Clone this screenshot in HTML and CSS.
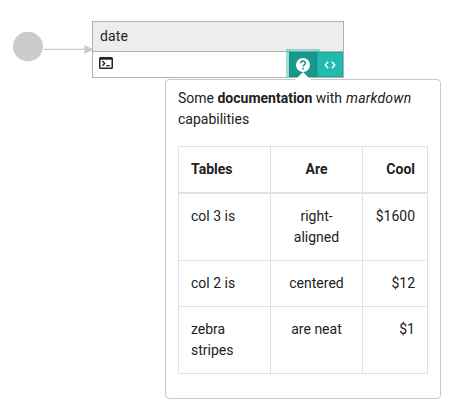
FILE: index.html
```html
<!DOCTYPE html>
<html lang="en">
<head>
<meta charset="utf-8">
<title>Workflow</title>
<link rel="stylesheet" href="styles.css">
</head>
<body>
<main class="canvas">
  <svg class="edges" width="100" height="80" viewBox="0 0 100 80" fill="#cbcbcb">
    <ellipse cx="28" cy="46.5" rx="15" ry="14.7"/>
    <path d="M44 49.4H86" stroke="#cbcbcb" stroke-width="1.3"/>
    <path d="M84.3 44.7L93.5 49.4L84.3 54Z"/>
  </svg>
  <section class="node">
    <header class="node-title">date</header>
    <div class="node-bar">
      <svg class="terminal" width="14" height="12" viewBox="0 0 14 12" fill="none" stroke="#212529">
        <rect x=".75" y=".75" width="12.5" height="10.5" rx=".8" stroke-width="1.5"/>
        <path d="M1 1.5H13" stroke-width="2.4"/>
        <path d="M3.4 4.1L5.7 6.4L3.4 8.7M7.2 8.6H10.8" stroke-width="1.4"/>
      </svg>
      <div class="actions">
        <button class="btn btn-help" aria-label="Help">
          <svg width="14" height="14" viewBox="0 0 14 14">
            <circle cx="7" cy="7" r="7" fill="#fff"/>
            <path d="M4.8 5.3C4.8 2.3 9.3 2.3 9.3 5.2C9.3 6.8 7.1 6.9 7.1 8.6" fill="none" stroke="#17988c" stroke-width="1.5"/>
            <path d="M6.3 9.8h1.6v1.6H6.3z" fill="#17988c"/>
          </svg>
        </button>
        <button class="btn btn-code" aria-label="Code">
          <svg width="12" height="8" viewBox="0 0 12 8" fill="none" stroke="#fff" stroke-width="1.4">
            <path d="M4.2 .8L1.2 4L4.2 7.2M7.8 .8L10.8 4L7.8 7.2"/>
          </svg>
        </button>
      </div>
    </div>
  </section>
  <aside class="popover">
    <svg class="arrow" width="16" height="8" viewBox="0 0 16 8"><path d="M0 8L8 0L16 8Z" fill="#fff"/></svg>
    <p>Some <strong>documentation</strong> with <em>markdown</em> capabilities</p>
    <table>
      <thead>
        <tr><th class="first">Tables</th><th class="center">Are</th><th class="right">Cool</th></tr>
      </thead>
      <tbody>
        <tr><td>col 3 is</td><td class="center">right-aligned</td><td class="right">$1600</td></tr>
        <tr><td>col 2 is</td><td class="center">centered</td><td class="right">$12</td></tr>
        <tr><td>zebra stripes</td><td class="center">are neat</td><td class="right">$1</td></tr>
      </tbody>
    </table>
  </aside>
</main>
</body>
</html>
```
FILE: styles.css
```css
* { box-sizing: border-box; }
body {
  margin: 0;
  background: #fff;
  color: #212529;
  font: 14px/21px Roboto, sans-serif;
}
.canvas { position: relative; height: 410px; overflow: hidden; }
.edges { position: absolute; left: 0; top: 0; }
.node {
  position: absolute;
  left: 92px;
  top: 21px;
  width: 252px;
  height: 57px;
  border: 1px solid #adb1b3;
}
.node-title {
  height: 30px;
  padding: 4px 7px;
  background: #ededed;
  border-bottom: 1px solid #adb1b3;
  letter-spacing: .1px;
}
.node-bar { display: flex; justify-content: space-between; height: 25px; }
.terminal { margin: 5px 0 0 6px; }
.actions { display: flex; }
.btn {
  display: flex;
  align-items: center;
  justify-content: center;
  width: 26px;
  padding: 0;
  border: 1px solid #1bab9f;
  background: #20bbae;
}
.btn-help {
  width: 28px;
  border-color: #178f85;
  background: #17988c;
  box-shadow: 0 0 0 3px rgba(32, 187, 174, .45);
  clip-path: inset(-3px -3px 0 -3px);
}
.btn-code { position: relative; z-index: 1; }
.popover {
  position: absolute;
  left: 165px;
  top: 79px;
  width: 276px;
  height: 320px;
  padding: 8px 12px;
  border: 1px solid #c8c8c8;
  border-radius: 4px;
  background: #fff;
  color: #212121;
}
.arrow { position: absolute; left: 129px; top: -8px; }
p { margin: 0 0 16px; }
em { margin-left: .5px; letter-spacing: .2px; }
strong, th { font-weight: 700; }
table { width: 250px; border-collapse: collapse; table-layout: fixed; }
th, td {
  padding: 12px;
  border: 1px solid #dee2e6;
  text-align: left;
  vertical-align: top;
}
thead th { border-bottom-width: 2px; }
.first { width: 92px; }
th.center { width: 92px; }
.center { text-align: center; }
.right { text-align: right; }
```
